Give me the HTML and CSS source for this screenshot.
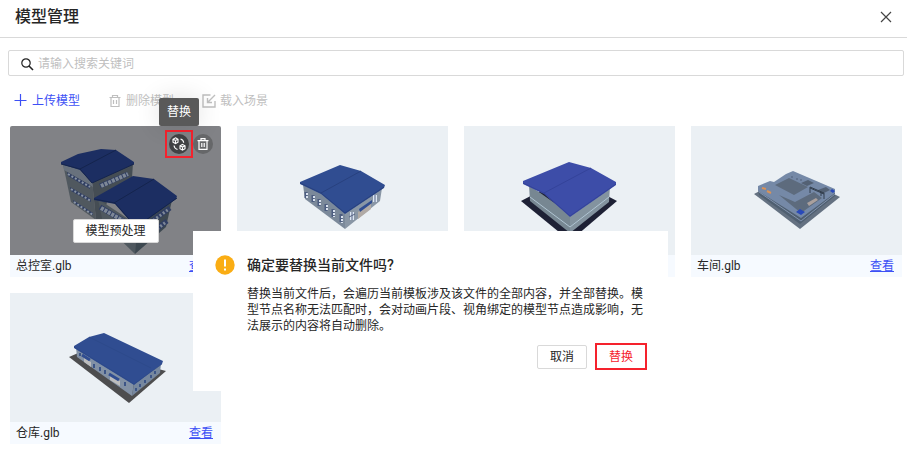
FILE: index.html
```
<!DOCTYPE html>
<html lang="zh-CN">
<head>
    <meta charset="UTF-8">
    <meta name="viewport" content="width=device-width, initial-scale=1.0">
    <title>模型管理</title>
    <link rel="stylesheet" href="styles.css">
</head>
<body>
    <header class="page-header">
        <h1>模型管理</h1>
        <button type="button" class="icon-btn close-btn" aria-label="关闭">
            <svg width="14" height="14" viewBox="0 0 14 14"><path d="M2 2l10 10M12 2L2 12" stroke="#444" stroke-width="1.2" fill="none"/></svg>
        </button>
    </header>

    <main>
        <form class="search-box">
            <svg width="14" height="14" viewBox="0 0 14 14" fill="none" stroke="#222" stroke-width="1.2"><circle cx="6" cy="6" r="4.2"/><path d="M9 9l4 4" stroke-width="1.6"/></svg>
            <input type="text" aria-label="搜索" placeholder="请输入搜索关键词">
        </form>

        <div class="toolbar">
            <button type="button" class="tool primary">
                <svg width="14" height="14" viewBox="0 0 14 14" fill="none" stroke="currentColor"><path d="M6.5 0v12M.5 6.500h12" stroke-width="1.2"/></svg>
                上传模型
            </button>
            <button type="button" class="tool" disabled>
                <svg width="14" height="14" viewBox="0 0 14 14" fill="none" stroke="currentColor" stroke-width="1.2"><path d="M1.5 3.5h11M4.5 3.5v-2h5v2M3 3.5v9h8v-9M5.5 6v4M8.5 6v4"/></svg>
                删除模型
            </button>
            <button type="button" class="tool" disabled>
                <svg width="14" height="14" viewBox="0 0 14 14" fill="none" stroke="currentColor" stroke-width="1.4"><path d="M8.500 1H1v12h12V7M13 1L6 8M5.500 4v4.500H10"/></svg>
                载入场景
            </button>
        </div>

        <section class="model-grid">
            <article class="card active">
                <div class="thumb">
                    <svg viewBox="0 0 211 129">
                        <path d="M53 38L61 76 86 94 82 54z" fill="#50585f"/>
                        <path d="M82 54L123 37 122 52 100 64 92 96 86 94z" fill="#454d54"/>
                        <path d="M53 38L70 42 82 56 83 61 54 44z" fill="#68717d"/>
                        <path d="M57 46l23 13v4L58 50zM60 61l21 12v3L61 65zM63 74l20 13v2L64 77z" fill="#303e63"/>
                        <path d="M58 48l22 13M61 63l20 12M64 76l19 13" stroke="#8994a5" stroke-width="2" stroke-dasharray="2 2"/>
                        <path d="M90 60l28-12" stroke="#303e63" stroke-width="5"/>
                        <path d="M91 60l27-12" stroke="#7e8897" stroke-width="4" stroke-dasharray="3 1"/>
                        <path d="M51 36L68 28 91 23 106 24 124 36 124 38 82 57 70 44 51 38z" fill="#1c2e62"/>
                        <path d="M106 24L70 43M51 38l19 5 12 14 42-19" fill="none" stroke="#14244d"/>
                        <path d="M88 73L93 97 125 128 126 98z" fill="#4f585f"/>
                        <path d="M126 98L162 74 156 101 125 128z" fill="#3d4850"/>
                        <path d="M90 81l27 16M97 98l20 15" stroke="#303e63" stroke-width="5"/>
                        <path d="M91 82l24 14M99 99l17 13" stroke="#7e8897" stroke-width="4" stroke-dasharray="3 1"/>
                        <path d="M139 97l21-15M140 108l17-13" stroke="#303e63" stroke-width="5"/>
                        <path d="M140 97l19-14M141 108l15-12" stroke="#7e8897" stroke-width="3" stroke-dasharray="2 2"/>
                        <path d="M84 72L123 50 144 53 167 70 166 73 126 102 105 78 84 74z" fill="#1c2e62"/>
                        <path d="M144 53L104 77M84 73l21 4 21 24 41-29" fill="none" stroke="#14244d"/>
                    </svg>
                    <div class="card-actions">
                        <div class="action marked">
                            <button type="button" class="icon-btn round dark" aria-label="替换" aria-describedby="replace-tip">
                                <svg width="14" height="14" viewBox="0 0 14 14" fill="none" stroke="#fff" stroke-width="1.100">
                                    <path d="M3.500.8L6 2.200v3L3.500 6.600 1 5.200v-3zM1 2.200l2.500 1.300L6 2.200M3.500 3.500v3M10.500 7.400L13 8.800v3l-2.500 1.400L8 11.800v-3zM8 8.800l2.500 1.300L13 8.800M10.500 10.100v3"/>
                                    <path d="M8.500 2q3 .8 3.200 3.700M2 8.500q.3 3 3.500 4"/>
                                </svg>
                            </button>
                            <span class="tooltip" id="replace-tip" role="tooltip">替换</span>
                        </div>
                        <div class="action">
                            <button type="button" class="icon-btn round" aria-label="删除">
                                <svg width="12" height="12" viewBox="0 0 12 12" fill="none" stroke="#fff" stroke-width="1.200"><path d="M.5 2.700h11M4 2.700V.7h4v2M2 2.700v8.600h8V2.700M4.800 5v4M7.200 5v4"/></svg>
                            </button>
                        </div>
                    </div>
                    <button type="button" class="btn preprocess">模型预处理</button>
                </div>
                <footer><span>总控室.glb</span><a href="#">查看</a></footer>
            </article>

            <article class="card">
                <div class="thumb">
                    <svg viewBox="0 0 211 129">
                        <path d="M66 59L68 73 108 103 108 86 84 66z" fill="#7b899a"/>
                        <path d="M108 87L145 62 143 75 108 103z" fill="#8996a5"/>
                        <path d="M69 66v6M76 69v7M82 73v7M89 78v7M96 83v8M104 88v8" stroke="#4c5d80" stroke-width="3"/>
                        <path d="M70 67v5M77 70v6M83 74v6M90 79v6M97 84v7M105 90v7" stroke="#d9e1ee" stroke-width="2" stroke-dasharray="2 1"/>
                        <path d="M121 86l13-9v6l-13 10z" fill="#b1aaa5"/>
                        <path d="M122 83l13-9v3l-12 9z" fill="#304d91"/>
                        <path d="M115 86v8M138 69v7" stroke="#dce6f3" stroke-width="4"/>
                        <path d="M115 86v8M138 69v7M112 91l6-3" stroke="#546283"/>
                        <path d="M63 56L103 39 124 45 148 59 147 62 108 88 84 68 63 58z" fill="#304d91"/>
                        <path d="M124 45L84 67M63 57l21 10 24 20 39-26" fill="none" stroke="#28417f"/>
                    </svg>
                </div>
                <footer></footer>
            </article>

            <article class="card">
                <div class="thumb">
                    <svg viewBox="0 0 211 129">
                        <path d="M57 75L105 50 153 75 106 115z" fill="#1e2135"/>
                        <path d="M65 59L66 75 106 107 106 88z" fill="#778792"/>
                        <path d="M106 88L146 60 145 76 106 107z" fill="#83939f"/>
                        <path d="M66 71l40 30 39-30" fill="none" stroke="#b0c5d3"/>
                        <path d="M59 55L105 36 127 42 152 56 152 59 106 91 80 68 59 58z" fill="#3d4da8"/>
                        <path d="M127 42L80 67M59 57l21 10 26 23 46-32" fill="none" stroke="#34439a"/>
                    </svg>
                </div>
                <footer></footer>
            </article>

            <article class="card">
                <div class="thumb">
                    <svg viewBox="0 0 211 129">
                        <path d="M63 68L102 48 149 71 109 103z" fill="#647181"/>
                        <path d="M67 62L68 69 109 98 144 70 144 63z" fill="#4f5f70"/>
                        <path d="M67 60L79 55 83 56 95 48 102 45 144 63 144 67 110 92 67 65z" fill="#7589a7"/>
                        <path d="M68 66l42 29 34-27" fill="none" stroke="#8192ad"/>
                        <path d="M84 59L98 52 117 61 103 69zM88 69l16 7 19-10 8 6-21 15z" fill="#5d6b7d"/>
                        <path d="M110 57l7-3 6 3-7 3zM127 64l8-3 4 3-8 4z" fill="#536174"/>
                        <path d="M119 67v-6l14 6v6M119 62l14 6M130 66v4" fill="none" stroke="#333f4e"/>
                        <path d="M116 77l9-5 2 2-9 6z" fill="#aaa09d"/>
                        <path d="M105 86l4-3 5 3-4 3zM139 65l2-2 3 2-2 2z" fill="#2949b8"/>
                        <path d="M71 62l4 1M76 65l4 2" stroke="#d99258" stroke-width="2"/>
                        <path d="M100 51h2M105 53h2M109 54h2" stroke="#52617a"/>
                    </svg>
                </div>
                <footer><span>车间.glb</span><a href="#">查看</a></footer>
            </article>

            <article class="card">
                <div class="thumb">
                    <svg viewBox="0 0 211 129">
                        <path d="M59 64L75 57 156 78 119 110z" fill="#4d4d4e"/>
                        <path d="M66 54L67 64 122 103 124 90z" fill="#8291a5"/>
                        <path d="M124 90L151 70 150 80 122 103z" fill="#76879e"/>
                        <path d="M74 65l7 4v5l-7-5zM100 82l10 6v5l-10-6z" fill="#bdbdbd"/>
                        <path d="M72 62l8 5M99 81l10 6" stroke="#304d91" stroke-width="3"/>
                        <path d="M70 60v3M84 71v4M90 74v4M95 77v4M115 89v4M126 95v3M130 91v3M135 87v3M141 82v3M145 78v3" stroke="#3c5587" stroke-width="2"/>
                        <path d="M64 53L79 44 94 40 153 68 152 71 141 79 124 92 64 55z" fill="#304d91"/>
                        <path d="M79 44L141 75M64 54l60 37 28-20" fill="none" stroke="#2a4687" stroke-width=".6"/>
                    </svg>
                </div>
                <footer><span>仓库.glb</span><a href="#">查看</a></footer>
            </article>
        </section>
    </main>

    <div class="confirm" role="dialog" aria-labelledby="confirm-title">
        <svg class="warn-icon" width="20" height="20" viewBox="0 0 20 20"><circle cx="10" cy="10" r="9.700" fill="#faad14"/><path d="M10 4.500v7M10 13.500v2" stroke="#fff" stroke-width="2"/></svg>
        <div class="confirm-body">
            <h2 id="confirm-title">确定要替换当前文件吗?</h2>
            <p>替换当前文件后，会遍历当前模板涉及该文件的全部内容，并全部替换。模型节点名称无法匹配时，会对动画片段、视角绑定的模型节点造成影响，无法展示的内容将自动删除。</p>
            <div class="confirm-actions">
                <button type="button" class="btn">取消</button>
                <button type="button" class="btn danger">替换</button>
            </div>
        </div>
    </div>
</body>
</html>
```
FILE: styles.css
```
* {
    box-sizing: border-box;
}
body {
    margin: 0;
    position: relative;
    background: #fff;
    color: #262626;
    font-family: Roboto, "Noto Sans CJK SC", sans-serif;
    font-size: 12px;
    line-height: 16px;
}
button, input {
    font: inherit;
    color: inherit;
}
button {
    padding: 0;
    border: none;
    background: none;
    cursor: pointer;
}
svg {
    display: block;
    flex: none;
}
.page-header {
    display: flex;
    align-items: center;
    justify-content: space-between;
    height: 38px;
    padding: 0 14px 4px 15px;
    border-bottom: 1px solid #d9d9d9;
}
.page-header h1 {
    margin: 0;
    font-size: 16px;
    line-height: 24px;
    font-weight: 500;
}
.icon-btn {
    display: flex;
    align-items: center;
    justify-content: center;
}
.search-box {
    display: flex;
    align-items: center;
    gap: 4px;
    height: 26px;
    margin: 12px 3px 0 8px;
    padding: 2px 11px 0;
    border: 1px solid #d9d9d9;
    border-radius: 2px;
}
.search-box input {
    flex: 1;
    min-width: 0;
    padding: 0;
    border: none;
    outline: none;
    background: none;
}
.search-box input::placeholder {
    color: #bfbfbf;
}
.toolbar {
    display: flex;
    gap: 28px;
    margin: 17px 14px;
}
.tool {
    display: flex;
    align-items: center;
    gap: 4px;
    color: #bfbfbf;
}
.tool.primary {
    color: #3d50f5;
}

/* model cards */
.model-grid {
    display: grid;
    grid-template-columns: repeat(4, 1fr);
    gap: 16px;
    padding: 0 5px 24px 10px;
}
.thumb {
    position: relative;
    background: #ebf0f4;
}
.thumb > svg {
    width: 100%;
}
.card.active .thumb {
    background: #818286;
    border-radius: 2px 2px 0 0;
}
.card footer {
    display: flex;
    align-items: center;
    justify-content: space-between;
    height: 22px;
    padding: 0 8px 0 6px;
    background: #f6faff;
}
.card a {
    color: #3d50f5;
    text-decoration: underline;
}
.card-actions {
    position: absolute;
    top: 4px;
    right: 8px;
    display: flex;
    align-items: center;
}
.action {
    position: relative;
}
.action.marked {
    padding: 2px;
    border: 2px solid #f5222d;
}
.round {
    width: 20px;
    height: 20px;
    border-radius: 50%;
    background: #666769;
}
.round.dark {
    background: #414244;
}
.tooltip {
    position: absolute;
    left: 50%;
    bottom: 30px;
    transform: translateX(-50%);
    padding: 6px 8px;
    border-radius: 2px;
    background: #595959;
    color: #fff;
    white-space: nowrap;
    box-shadow: 0 0 24px rgba(0, 0, 0, 0.12);
}
.btn {
    height: 24px;
    padding: 0 12px;
    border: 1px solid #d9d9d9;
    border-radius: 2px;
    background: #fff;
}
.preprocess {
    position: absolute;
    left: 50%;
    bottom: 12px;
    transform: translateX(-50%);
    white-space: nowrap;
}

/* confirm dialog */
.confirm {
    position: absolute;
    top: 231px;
    left: 193px;
    display: flex;
    gap: 12px;
    width: 475px;
    padding: 24px 21px 21px 22px;
    background: #fff;
}
.confirm-body {
    flex: 1;
}
.confirm h2 {
    margin: 0;
    font-size: 14px;
    line-height: 20px;
    font-weight: 500;
}
.confirm p {
    margin: 11px 0 9px;
}
.confirm-actions {
    display: flex;
    align-items: center;
    justify-content: flex-end;
    gap: 8px;
}
.btn.danger {
    height: 27px;
    border: 2px solid #f5222d;
    border-radius: 0;
    color: #f5222d;
}
```
